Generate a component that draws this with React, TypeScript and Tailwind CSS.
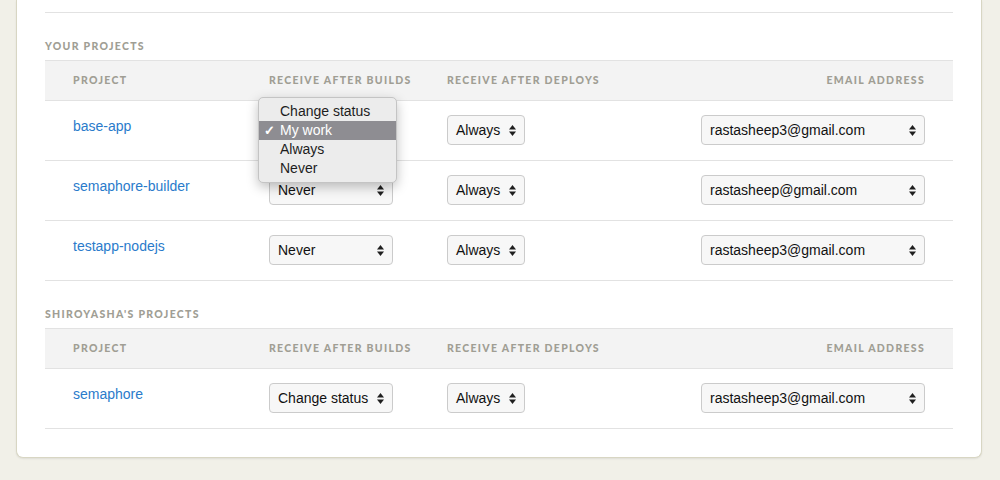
import React from 'react';

type Row = { name: string; builds: string; deploys: string; email: string };

const yourProjects: Row[] = [
  { name: 'base-app', builds: 'My work', deploys: 'Always', email: 'rastasheep3@gmail.com' },
  { name: 'semaphore-builder', builds: 'Never', deploys: 'Always', email: 'rastasheep@gmail.com' },
  { name: 'testapp-nodejs', builds: 'Never', deploys: 'Always', email: 'rastasheep3@gmail.com' },
];

const sharedProjects: Row[] = [
  { name: 'semaphore', builds: 'Change status', deploys: 'Always', email: 'rastasheep3@gmail.com' },
];

function Arrows() {
  return (
    <svg width="7" height="11" viewBox="0 0 7 11" className="shrink-0">
      <path d="M0 4.5 L3.5 0 L7 4.5 Z" fill="#1f1f1f" />
      <path d="M0 6.5 L3.5 11 L7 6.5 Z" fill="#1f1f1f" />
    </svg>
  );
}

function FakeSelect({ value, width }: { value: string; width: string }) {
  return (
    <div
      className={`${width} h-[30px] flex items-center justify-between pl-[8px] pr-[8px] border border-[#cbcbcb] rounded-[4px] bg-[#f7f7f7] text-[14px] text-[#111] font-['Liberation_Sans',Arial,sans-serif]`}
    >
      <span>{value}</span>
      <Arrows />
    </div>
  );
}

function SectionTitle({ children }: { children: React.ReactNode }) {
  return (
    <div className="pt-[27px] pb-[8px] leading-[12px] text-[10.5px] font-black tracking-[1.3px] uppercase text-[#a09e94]">
      {children}
    </div>
  );
}

function HeaderRow() {
  return (
    <div className="flex items-center h-[41px] bg-[#f3f3f3] border-y border-[#e2e2e2] px-[28px] text-[10.5px] font-black tracking-[1.3px] uppercase text-[#a09e94]">
      <div className="w-[196px]">Project</div>
      <div className="w-[178px]">Receive after builds</div>
      <div className="flex-1">Receive after deploys</div>
      <div className="text-right">Email address</div>
    </div>
  );
}

function ProjectRow({ row }: { row: Row }) {
  return (
    <div className="flex items-start h-[60px] border-b border-[#e2e2e2] px-[28px] pt-[14px]">
      <div className="w-[196px] pt-[3px] leading-[16px] text-[14px] text-[#2a7bcb] font-['Liberation_Sans',Arial,sans-serif]">
        {row.name}
      </div>
      <div className="w-[178px]">
        <FakeSelect value={row.builds} width="w-[124px]" />
      </div>
      <div className="flex-1">
        <FakeSelect value={row.deploys} width="w-[78px]" />
      </div>
      <FakeSelect value={row.email} width="w-[224px]" />
    </div>
  );
}

function PopupMenu() {
  const items = ['Change status', 'My work', 'Always', 'Never'];
  return (
    <div className="absolute left-[258px] top-[97px] w-[139px] py-[4px] rounded-[5px] bg-[#ececec] border border-[#c4c4c4] shadow-[0_4px_12px_rgba(0,0,0,0.25)] text-[14px] font-['Liberation_Sans',Arial,sans-serif]">
      {items.map((it) => {
        const active = it === 'My work';
        return (
          <div
            key={it}
            className={`relative h-[19px] leading-[19px] pl-[21px] ${active ? 'bg-[#8e8d92] text-white' : 'text-[#1d1d1d]'}`}
          >
            {active && <span className="absolute left-[5px] top-0 text-[13px] font-bold">✓</span>}
            {it}
          </div>
        );
      })}
    </div>
  );
}

export default function App() {
  return (
    <div className="relative h-[480px] w-[1000px] bg-[#f1f0e8] pl-[16px] pr-[18px] font-['Lato','Open_Sans',sans-serif] overflow-hidden">
      <div className="bg-white border-x border-b border-[#d8d6c3] rounded-b-[7px] shadow-[0_1px_2px_rgba(0,0,0,0.08)] px-[28px] pb-[28px]">
        <div className="h-[13px] border-b border-[#e2e2e2]" />

        <SectionTitle>Your projects</SectionTitle>
        <HeaderRow />
        {yourProjects.map((r) => (
          <ProjectRow key={r.name} row={r} />
        ))}

        <SectionTitle>Shiroyasha's projects</SectionTitle>
        <HeaderRow />
        {sharedProjects.map((r) => (
          <ProjectRow key={r.name} row={r} />
        ))}
      </div>

      <PopupMenu />
    </div>
  );
}
